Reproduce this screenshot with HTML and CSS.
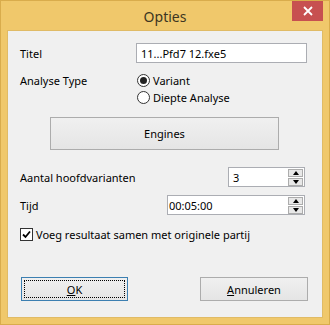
FILE: index.html
```html
<!DOCTYPE html>
<html lang="nl">
<head>
    <meta charset="UTF-8">
    <title>Opties</title>
    <link rel="stylesheet" href="styles.css">
</head>
<body>
    <div class="window">
        <div class="titlebar">
            <span class="title">Opties</span>
            <div class="close">
                <svg width="10" height="10" viewBox="0 0 10 10"><path d="M1 1 L9 9 M9 1 L1 9" stroke="#fff" stroke-width="1.8"/></svg>
            </div>
        </div>
        <div class="client">
            <div class="row row-titel">
                <span class="label">Titel</span>
                <div class="field title-field">11...Pfd7 12.fxe5</div>
            </div>
            <div class="row row-type">
                <span class="label">Analyse Type</span>
                <div class="radios">
                    <div class="radio"><span class="circle checked"></span>Variant</div>
                    <div class="radio"><span class="circle"></span>Diepte Analyse</div>
                </div>
            </div>
            <div class="btn engines">Engines</div>
            <div class="row row-spin">
                <span class="label">Aantal hoofdvarianten</span>
                <div class="field spin spin-small">
                    <span>3</span>
                    <div class="spin-btns">
                        <div class="spin-btn"><span class="arrow up"></span></div>
                        <div class="spin-btn"><span class="arrow down"></span></div>
                    </div>
                </div>
            </div>
            <div class="row row-spin row-tijd">
                <span class="label">Tijd</span>
                <div class="field spin spin-wide">
                    <span>00:05:00</span>
                    <div class="spin-btns">
                        <div class="spin-btn"><span class="arrow up"></span></div>
                        <div class="spin-btn"><span class="arrow down"></span></div>
                    </div>
                </div>
            </div>
            <div class="check-row">
                <span class="checkbox">
                    <svg width="11" height="11" viewBox="0 0 11 11"><path d="M2 5.5 L4.5 8 L9 2.5" stroke="#000" stroke-width="1.8" fill="none"/></svg>
                </span>
                Voeg resultaat samen met originele partij
            </div>
            <div class="buttons">
                <div class="btn ok"><span class="focus"><u>O</u>K</span></div>
                <div class="btn cancel"><u>A</u>nnuleren</div>
            </div>
        </div>
    </div>
</body>
</html>
```

FILE: styles.css
```css
body {
    margin: 0;
    font-family: "Segoe UI", "Noto Sans", sans-serif;
    font-size: 11px;
    color: #000;
}
.window {
    width: 330px;
    height: 325px;
    box-sizing: border-box;
    background-color: #f0c86b;
    border: 1px solid #d9ac4c;
}
.titlebar {
    height: 29px;
    position: relative;
    display: flex;
    justify-content: center;
    align-items: center;
}
.title {
    font-size: 14px;
    color: #3d3622;
    margin-top: 1px;
}
.close {
    position: absolute;
    top: 0;
    right: 6px;
    width: 31px;
    height: 20px;
    background-color: #c75050;
    display: flex;
    justify-content: center;
    align-items: center;
}
.client {
    margin: 0 6px;
    height: 288px;
    box-sizing: border-box;
    border: 1px solid #e0bb66;
    background-color: #f0f0f0;
    padding: 0 15px 0 12px;
}
.row {
    display: grid;
    grid-template-columns: 116px 1fr;
    align-items: center;
}
.label {
    white-space: nowrap;
}
.field {
    box-sizing: border-box;
    background-color: #fff;
    border: 1px solid #abadb3;
    display: flex;
    align-items: center;
}
.row-titel {
    margin-top: 12px;
}
.title-field {
    height: 20px;
    padding-left: 4px;
}
.row-type {
    margin-top: 9px;
    align-items: start;
}
.row-type .label {
    line-height: 17px;
}
.radio {
    height: 17px;
    display: flex;
    align-items: center;
    margin-left: 1px;
}
.circle {
    width: 13px;
    height: 13px;
    box-sizing: border-box;
    border: 1px solid #333;
    border-radius: 50%;
    background-color: #fff;
    margin-right: 3px;
    display: flex;
    justify-content: center;
    align-items: center;
}
.circle.checked::after {
    content: "";
    width: 7px;
    height: 7px;
    border-radius: 50%;
    background-color: #222;
}
.btn {
    box-sizing: border-box;
    border: 1px solid #acacac;
    background: linear-gradient(#f0f0f0, #e5e5e5);
    display: flex;
    justify-content: center;
    align-items: center;
}
.engines {
    margin: 11px 0 0 30px;
    width: 229px;
    height: 33px;
}
.row-spin {
    margin-top: 17px;
}
.row-tijd {
    margin-top: 8px;
}
.spin {
    height: 20px;
    justify-self: end;
    margin-right: 2px;
    justify-content: space-between;
}
.spin-small {
    width: 77px;
    padding-left: 4px;
}
.spin-wide {
    width: 138px;
    padding-left: 1px;
}
.spin-btns {
    display: flex;
    flex-direction: column;
    gap: 1px;
    margin-right: 1px;
}
.spin-btn {
    width: 15px;
    height: 8px;
    box-sizing: border-box;
    border: 1px solid #acacac;
    background-color: #e8e8e8;
    display: flex;
    justify-content: center;
    align-items: center;
}
.arrow {
    width: 0;
    height: 0;
    border-left: 3.5px solid transparent;
    border-right: 3.5px solid transparent;
}
.arrow.up {
    border-bottom: 4px solid #000;
}
.arrow.down {
    border-top: 4px solid #000;
}
.check-row {
    margin-top: 12px;
    display: flex;
    align-items: center;
    height: 15px;
}
.checkbox {
    width: 13px;
    height: 13px;
    box-sizing: border-box;
    border: 1px solid #333;
    background-color: #fff;
    margin-right: 3px;
    display: flex;
    justify-content: center;
    align-items: center;
}
.buttons {
    margin-top: 35px;
    display: flex;
    justify-content: space-between;
    margin-left: 1px;
    margin-right: -1px;
}
.ok, .cancel {
    height: 24px;
}
.ok {
    width: 107px;
    border-color: #3c7fb1;
    padding: 2px;
}
.focus {
    flex: 1;
    align-self: stretch;
    border: 1px dotted #000;
    display: flex;
    justify-content: center;
    align-items: center;
}
.cancel {
    width: 108px;
}
```
